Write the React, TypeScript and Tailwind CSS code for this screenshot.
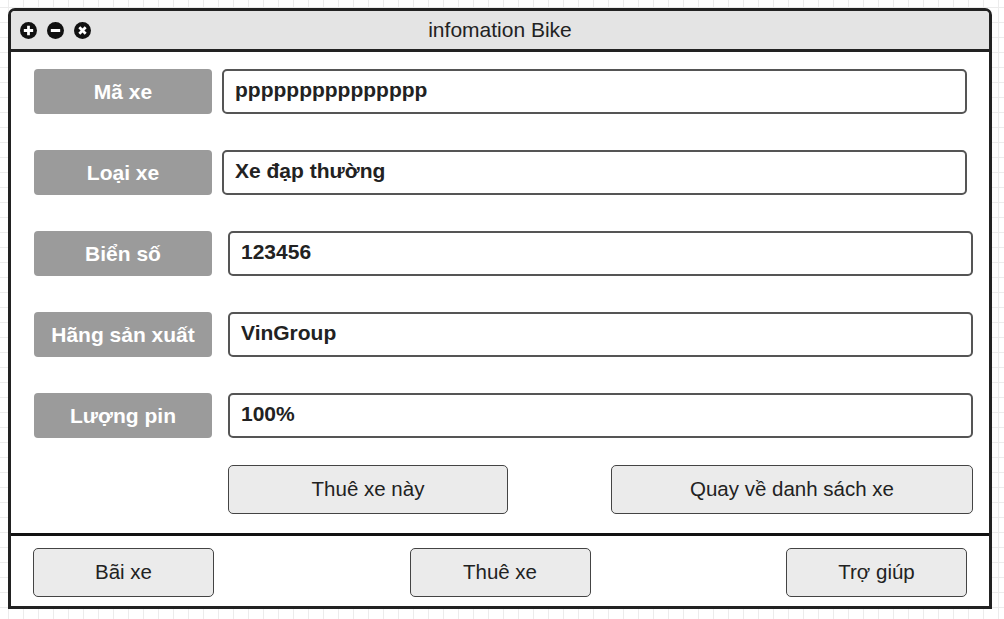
import React from "react";

const fields = [
  { label: "Mã xe", value: "ppppppppppppppp", gap: "gap-[10px]" },
  { label: "Loại xe", value: "Xe đạp thường", gap: "gap-[10px]" },
  { label: "Biển số", value: "123456", gap: "gap-[16px]" },
  { label: "Hãng sản xuất", value: "VinGroup", gap: "gap-[16px]" },
  { label: "Lượng pin", value: "100%", gap: "gap-[16px]" },
];

function WinIcon({ kind }: { kind: "plus" | "minus" | "close" }) {
  return (
    <svg width="17" height="17" viewBox="0 0 16 16" className="shrink-0">
      <circle cx="8" cy="8" r="8" fill="#111" />
      {kind === "plus" && (
        <path d="M8 3.6v8.8M3.6 8h8.8" stroke="#fff" strokeWidth="2.6" />
      )}
      {kind === "minus" && <path d="M3.6 8h8.8" stroke="#fff" strokeWidth="3" />}
      {kind === "close" && (
        <path d="M5 5l6 6M11 5l-6 6" stroke="#fff" strokeWidth="2.6" />
      )}
    </svg>
  );
}

function Button({ children, className }: { children: React.ReactNode; className: string }) {
  return (
    <button
      className={
        "h-[49px] rounded-[5px] border-[1.5px] border-[#444] bg-[#ebebeb] text-[20.5px] text-[#222] " +
        className
      }
    >
      {children}
    </button>
  );
}

export default function App() {
  return (
    <div className="w-[1004px] h-[619px] overflow-hidden bg-white bg-[linear-gradient(to_right,#ececec_1px,transparent_1px),linear-gradient(to_bottom,#ececec_1px,transparent_1px)] bg-[size:15px_15px] bg-[position:8px_7px] pt-[8px] pl-[8px] font-['Liberation_Sans',Arial,sans-serif]">
      {/* Window */}
      <div className="w-[984px] h-[601px] border-[3px] border-[#222] rounded-t-[7px] bg-white flex flex-col overflow-hidden">
        {/* Title bar */}
        <div className="h-[41px] shrink-0 bg-[#e4e4e4] border-b-[3px] border-[#222] grid grid-cols-[1fr_auto_1fr] items-center">
          <div className="flex items-center gap-[10px] pl-[9px]">
            <WinIcon kind="plus" />
            <WinIcon kind="minus" />
            <WinIcon kind="close" />
          </div>
          <div className="text-[21px] text-[#222]">infomation Bike</div>
          <div />
        </div>

        {/* Form */}
        <div className="flex-1 pt-[17px] pl-[23px] flex flex-col">
          <div className="flex flex-col gap-[36px]">
            {fields.map((f) => (
              <div key={f.label} className={"flex " + f.gap}>
                <div className="w-[178px] h-[45px] rounded-[4px] bg-[#9b9b9b] flex items-center justify-center text-white font-bold text-[21px]">
                  {f.label}
                </div>
                <div className="w-[745px] h-[45px] rounded-[5px] border-2 border-[#555] bg-white flex items-center pl-[11px] pb-[3px] font-bold text-[21px] text-[#222]">
                  {f.value}
                </div>
              </div>
            ))}
          </div>

          <div className="flex mt-[27px] ml-[194px] gap-[103px]">
            <Button className="w-[280px]">Thuê xe này</Button>
            <Button className="w-[362px]">Quay về danh sách xe</Button>
          </div>
        </div>

        {/* Bottom bar */}
        <div className="h-[73px] shrink-0 border-t-[3px] border-[#111] flex justify-between items-start pt-[12px] px-[22px]">
          <Button className="w-[181px]">Bãi xe</Button>
          <Button className="w-[181px]">Thuê xe</Button>
          <Button className="w-[181px]">Trợ giúp</Button>
        </div>
      </div>
    </div>
  );
}
